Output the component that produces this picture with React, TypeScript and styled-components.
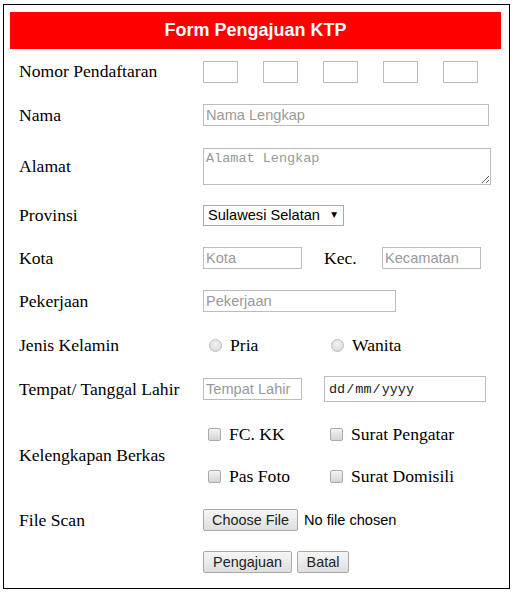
import React from "react";
import styled, { createGlobalStyle } from "styled-components";

const Global = createGlobalStyle`
  html, body { margin: 0; padding: 0; background: #fff; }
  body { font-family: "Liberation Serif", "Times New Roman", serif; color: #000; }
  * { box-sizing: border-box; }
`;

const Frame = styled.div`
  margin: 4px 0 0 3px;
  width: 507px;
  height: 585px;
  border: 1px solid #000;
  padding: 7px 8px 0 6px;
`;

const Header = styled.div`
  height: 37px;
  background: #ff0000;
  color: #fff;
  font-family: "Liberation Sans", Arial, sans-serif;
  font-weight: bold;
  font-size: 18px;
  display: flex;
  align-items: center;
  justify-content: center;
`;

const Row = styled.div<{ $h: number }>`
  height: ${(p) => p.$h}px;
  display: flex;
  align-items: center;
  padding-left: 9px;
`;

const Label = styled.div`
  width: 184px;
  flex: none;
  font-size: 17.6px;
`;

const Field = styled.div<{ $gap?: number }>`
  display: flex;
  align-items: center;
  gap: ${(p) => p.$gap ?? 0}px;
`;

const TextInput = styled.input<{ $w: number; $h?: number }>`
  width: ${(p) => p.$w}px;
  height: ${(p) => p.$h ?? 22}px;
  border: 1px solid #bcbcbc;
  padding: 1px 2px;
  font-family: "Liberation Sans", Arial, sans-serif;
  font-size: 14.6px;
  color: #000;
  outline: none;
  background: #fff;
  &::placeholder { color: #999; }
`;

const TextArea = styled.textarea`
  width: 288px;
  height: 37px;
  border: 1px solid #bcbcbc;
  padding: 2px 2px;
  font-family: "Liberation Mono", monospace;
  font-size: 13.5px;
  resize: both;
  outline: none;
  &::placeholder { color: #999; }
`;

const SelectWrap = styled.div`
  position: relative;
  width: 141px;
  height: 21px;
`;

const Select = styled.select`
  appearance: none;
  -webkit-appearance: none;
  width: 100%;
  height: 100%;
  border: 1px solid #a9a9a9;
  border-radius: 0;
  background: #fff;
  padding: 0 14px 0 4px;
  font-family: "Liberation Sans", Arial, sans-serif;
  font-size: 14.6px;
  color: #000;
  outline: none;
`;

const Arrow = styled.span`
  position: absolute;
  right: 7px;
  top: 5px;
  font-size: 7.5px;
  line-height: 10px;
  pointer-events: none;
  font-family: "DejaVu Sans", sans-serif;
`;

const InlineLabel = styled.span`
  font-size: 17.6px;
  width: 58px;
`;

const ChoiceGrid = styled.div<{ $rowGap: number }>`
  display: grid;
  grid-template-columns: 122px auto;
  row-gap: ${(p) => p.$rowGap}px;
`;

const Choice = styled.label`
  display: flex;
  align-items: center;
  font-size: 17.6px;
  height: 18px;
`;

const Radio = styled.input`
  appearance: none;
  -webkit-appearance: none;
  width: 13px;
  height: 13px;
  margin: 0 8px 0 6px;
  border-radius: 50%;
  border: 1px solid #bdbdbd;
  background: radial-gradient(circle at 50% 35%, #f2f2f2 0%, #d6d6d6 100%);
  flex: none;
`;

const Check = styled.input`
  appearance: none;
  -webkit-appearance: none;
  width: 13px;
  height: 13px;
  margin: 0 8px 0 5px;
  border-radius: 2px;
  border: 1px solid #ababab;
  background: linear-gradient(#f3f3f3, #d4d4d4);
  flex: none;
`;

const DateBox = styled.div`
  width: 162px;
  height: 26px;
  border: 1px solid #bcbcbc;
  display: flex;
  align-items: center;
  padding-left: 4px;
  font-family: "Liberation Mono", monospace;
  font-size: 13.5px;
  color: #222;
`;

const Sep = styled.span`
  margin: 0 1px;
`;

const Button = styled.button<{ $w: number }>`
  width: ${(p) => p.$w}px;
  height: 22px;
  border: 1px solid #a9a9a9;
  border-radius: 2px;
  background: linear-gradient(#f6f6f6, #dedede);
  font-family: "Liberation Sans", Arial, sans-serif;
  font-size: 14.4px;
  color: #222;
  padding: 0;
`;

const FileText = styled.span`
  font-family: "Liberation Sans", Arial, sans-serif;
  font-size: 14.6px;
  margin-left: 6px;
`;

const nomorBoxes = [0, 1, 2, 3, 4];

export default function App() {
  return (
    <>
      <Global />
      <Frame>
        <Header>Form Pengajuan KTP</Header>
        <Row $h={45}>
          <Label>Nomor Pendaftaran</Label>
          <Field $gap={25}>
            {nomorBoxes.map((i) => (
              <TextInput key={i} $w={35} />
            ))}
          </Field>
        </Row>
        <Row $h={42}>
          <Label>Nama</Label>
          <TextInput $w={286} placeholder="Nama Lengkap" />
        </Row>
        <Row $h={60}>
          <Label>Alamat</Label>
          <TextArea placeholder="Alamat Lengkap" />
        </Row>
        <Row $h={38}>
          <Label>Provinsi</Label>
          <SelectWrap>
            <Select defaultValue="sulsel">
              <option value="sulsel">Sulawesi Selatan</option>
            </Select>
            <Arrow>▼</Arrow>
          </SelectWrap>
        </Row>
        <Row $h={48}>
          <Label>Kota</Label>
          <Field>
            <TextInput $w={99} placeholder="Kota" style={{ marginRight: 22 }} />
            <InlineLabel>Kec.</InlineLabel>
            <TextInput $w={99} placeholder="Kecamatan" />
          </Field>
        </Row>
        <Row $h={38}>
          <Label>Pekerjaan</Label>
          <TextInput $w={193} placeholder="Pekerjaan" />
        </Row>
        <Row $h={50}>
          <Label>Jenis Kelamin</Label>
          <ChoiceGrid $rowGap={0}>
            <Choice>
              <Radio type="radio" name="jk" />
              Pria
            </Choice>
            <Choice>
              <Radio type="radio" name="jk" />
              Wanita
            </Choice>
          </ChoiceGrid>
        </Row>
        <Row $h={38}>
          <Label>Tempat/ Tanggal Lahir</Label>
          <Field $gap={22}>
            <TextInput $w={99} placeholder="Tempat Lahir" />
            <DateBox>
              dd<Sep>/</Sep>mm<Sep>/</Sep>yyyy
            </DateBox>
          </Field>
        </Row>
        <Row $h={94}>
          <Label>Kelengkapan Berkas</Label>
          <ChoiceGrid $rowGap={24}>
            <Choice>
              <Check type="checkbox" />
              FC. KK
            </Choice>
            <Choice>
              <Check type="checkbox" />
              Surat Pengatar
            </Choice>
            <Choice>
              <Check type="checkbox" />
              Pas Foto
            </Choice>
            <Choice>
              <Check type="checkbox" />
              Surat Domisili
            </Choice>
          </ChoiceGrid>
        </Row>
        <Row $h={36}>
          <Label>File Scan</Label>
          <Field>
            <Button $w={95}>Choose File</Button>
            <FileText>No file chosen</FileText>
          </Field>
        </Row>
        <Row $h={48}>
          <Label />
          <Field $gap={5}>
            <Button $w={89}>Pengajuan</Button>
            <Button $w={52}>Batal</Button>
          </Field>
        </Row>
      </Frame>
    </>
  );
}
